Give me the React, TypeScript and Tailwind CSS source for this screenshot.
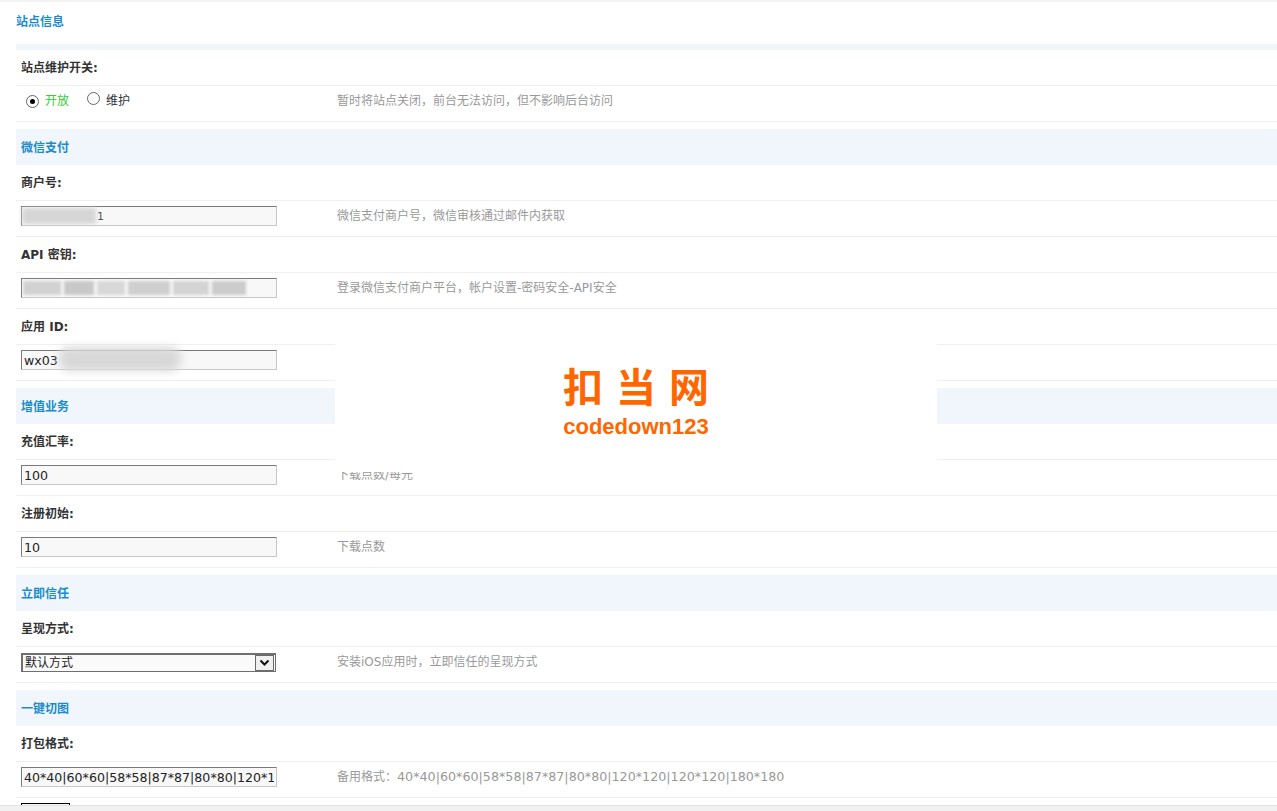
import React from 'react';

const font = "font-['DejaVu_Sans','Noto_Sans_CJK_SC',sans-serif]";

function Header({ children }: { children: React.ReactNode }) {
  return (
    <div className="mt-[7px] h-[36px] flex items-center pt-[2px] px-[5px] bg-[#f0f6fb] text-[#1a8ccc] font-bold text-[12px]">
      {children}
    </div>
  );
}

function Label({ children }: { children: React.ReactNode }) {
  return (
    <div className="h-[36px] flex items-center px-[5px] border-b border-[#efefef] font-bold text-[12px] text-[#333]">
      {children}
    </div>
  );
}

function Field({ children, hint }: { children: React.ReactNode; hint?: React.ReactNode }) {
  return (
    <div className="h-[36px] flex items-center pb-[5px] border-b border-[#efefef]">
      <div className="w-[316px] pl-[5px] shrink-0">{children}</div>
      <div className="pl-[5px] text-[12px] text-[#999] whitespace-nowrap">{hint}</div>
    </div>
  );
}

function TextBox({ value, children }: { value: string; children?: React.ReactNode }) {
  return (
    <div className="relative w-[256px] h-[20px]">
      <input
        readOnly
        value={value}
        className="block w-full h-full px-[2px] text-[12.6px] text-[#222] bg-[#f8f8f8] border border-t-[#7a7a7a] border-l-[#7a7a7a] border-r-[#c8c8c8] border-b-[#c8c8c8] outline-none"
      />
      {children}
    </div>
  );
}

function Radio({ checked }: { checked?: boolean }) {
  return (
    <span className="inline-flex items-center justify-center w-[13px] h-[13px] rounded-full border border-[#666] bg-white">
      {checked && <span className="w-[5px] h-[5px] rounded-full bg-black" />}
    </span>
  );
}

export default function App() {
  return (
    <div className={`relative h-[811px] w-full overflow-hidden bg-white ${font}`}>
      <div className="h-[2px] bg-[#f3f3f3]" />
      <div className="pl-4">
        <div className="h-[42px] pt-[13px] leading-[14px] text-[12px] font-bold text-[#1a8ccc]">站点信息</div>
        <div className="h-[6px] bg-[#f0f6fb]" />
        <Label>站点维护开关:</Label>
        <Field hint="暂时将站点关闭，前台无法访问，但不影响后台访问">
          <div className="flex items-center text-[12px] pl-[5px]">
            <Radio checked />
            <span className="ml-[6px] text-[#33cc33]">开放</span>
            <span className="ml-[18px]"><Radio /></span>
            <span className="ml-[6px] text-[#333]">维护</span>
          </div>
        </Field>

        <Header>微信支付</Header>
        <Label>商户号:</Label>
        <Field hint="微信支付商户号，微信审核通过邮件内获取">
          <TextBox value="">
            <div className="absolute left-[1px] top-[2px] w-[74px] h-[16px] bg-[#d6d6d6] blur-[2px]" />
            <span className="absolute left-[76px] top-[3px] text-[11px] text-[#555]">1</span>
          </TextBox>
        </Field>
        <Label>API 密钥:</Label>
        <Field hint="登录微信支付商户平台，帐户设置-密码安全-API安全">
          <TextBox value="">
            <div className="absolute left-[2px] top-[3px] flex gap-[3px]">
              <div className="w-[38px] h-[14px] bg-[#d2d2d2] blur-[1.5px]" />
              <div className="w-[30px] h-[14px] bg-[#c8c8c8] blur-[1.5px]" />
              <div className="w-[28px] h-[14px] bg-[#d8d8d8] blur-[1.5px]" />
              <div className="w-[42px] h-[14px] bg-[#cfcfcf] blur-[1.5px]" />
              <div className="w-[36px] h-[14px] bg-[#d4d4d4] blur-[1.5px]" />
              <div className="w-[34px] h-[14px] bg-[#cccccc] blur-[1.5px]" />
            </div>
          </TextBox>
        </Field>
        <Label>应用 ID:</Label>
        <Field>
          <TextBox value="wx03">
            <div className="absolute left-[38px] top-[-3px] w-[122px] h-[24px] rounded-[10px] bg-[#d8d8d8] blur-[4px]" />
          </TextBox>
        </Field>

        <Header>增值业务</Header>
        <Label>充值汇率:</Label>
        <Field hint="下载点数/每元">
          <TextBox value="100" />
        </Field>
        <Label>注册初始:</Label>
        <Field hint="下载点数">
          <TextBox value="10" />
        </Field>

        <Header>立即信任</Header>
        <Label>呈现方式:</Label>
        <Field hint="安装iOS应用时，立即信任的呈现方式">
          <div className="relative w-[255px] h-[19px] flex items-center border border-[#6f6f6f] border-t-2 border-l-2 bg-[#fafafa] text-[12px] text-[#222]">
            <span className="pl-[2px]">默认方式</span>
            <span className="absolute right-[1px] top-[0px] w-[19px] h-[16px] flex items-center justify-center border border-[#6a6a6a] bg-[#f0f0f0]">
              <svg width="11" height="8" viewBox="0 0 11 8">
                <path d="M1.5 1.5 L5.5 5.5 L9.5 1.5" fill="none" stroke="#111" strokeWidth="2" />
              </svg>
            </span>
          </div>
        </Field>

        <Header>一键切图</Header>
        <Label>打包格式:</Label>
        <Field
          hint={
            <>
              备用格式：<span className="text-[12.7px]">40*40|60*60|58*58|87*87|80*80|120*120|120*120|180*180</span>
            </>
          }
        >
          <TextBox value="40*40|60*60|58*58|87*87|80*80|120*120|120*120|180*180" />
        </Field>
        <div className="h-[36px] pt-[5px] pl-[5px]">
          <div className="w-[49px] h-[22px] border border-black bg-[#f4f4f4]" />
        </div>
      </div>

      {/* watermark overlay */}
      <div className="absolute left-[335px] top-[310px] w-[602px] h-[162px] bg-white flex flex-col items-center pt-[53px]">
        <div className="h-[44px] leading-[44px] text-[40px] font-bold text-[#ff6600] tracking-[13px] pl-[13px] font-['Noto_Sans_CJK_SC',sans-serif]">
          扣当网
        </div>
        <div className="mt-[7px] h-[26px] leading-[26px] text-[22px] font-bold text-[#ff6600] font-['Liberation_Sans',sans-serif]">
          codedown123
        </div>
      </div>

      {/* bottom bar */}
      <div className="absolute left-0 right-0 bottom-0 h-[6px] bg-[#f1f1f1] border-t border-[#e2e2e2]" />
    </div>
  );
}
